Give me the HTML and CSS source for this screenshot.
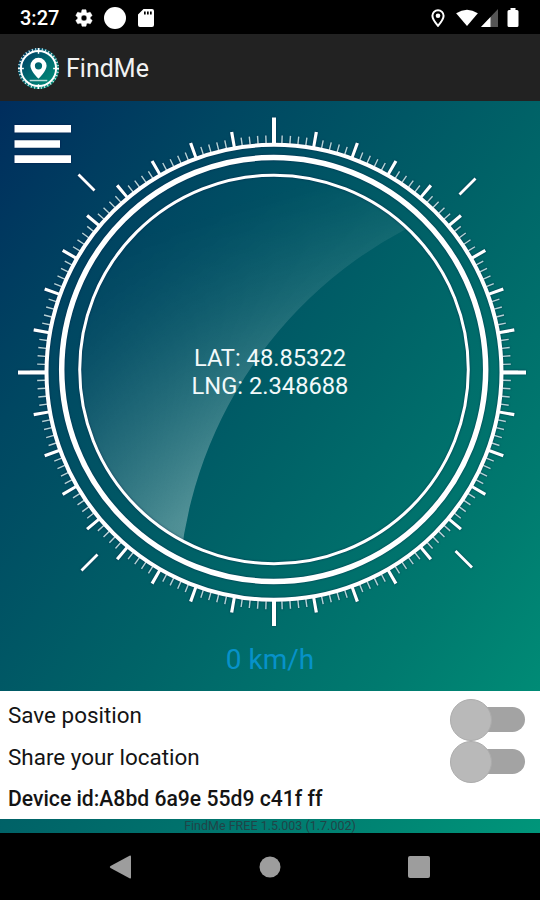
FILE: index.html
```html
<!DOCTYPE html>
<html lang="en">
<head>
<meta charset="utf-8">
<title>FindMe</title>
<link rel="stylesheet" href="styles.css">
</head>
<body>
<div class="phone">
  <div class="status">
    <span class="time">3:27</span>
    <svg class="gear" viewBox="0 0 24 24"><path fill-rule="evenodd" d="M19.4 13c.1-.7.1-1.300 0-2l2.100-1.600c.2-.2.300-.4.1-.7l-2-3.400c-.1-.3-.4-.3-.6-.3l-2.500 1c-.5-.4-1.100-.7-1.700-1L14.500 2.400c0-.3-.2-.4-.5-.4h-4c-.3 0-.5.2-.5.4L9.100 5c-.6.3-1.200.6-1.700 1L4.900 5c-.2-.1-.5 0-.6.2l-2 3.500c-.1.2-.1.500.1.700L4.500 11c-.1.700-.1 1.300 0 2l-2.100 1.600c-.2.2-.3.4-.1.700l2 3.400c.1.3.4.300.6.300l2.500-1c.5.4 1.100.7 1.700 1l.4 2.600c0 .3.200.4.500.4h4c.3 0 .5-.2.500-.4l.4-2.600c.6-.3 1.200-.6 1.700-1l2.500 1c.2.1.5 0 .6-.300l2-3.400c.1-.2.1-.5-.1-.7zM12 15.500a3.500 3.500 0 1 1 0-7 3.500 3.500 0 0 1 0 7z"/></svg>
    <span class="dot"></span>
    <svg class="sd" viewBox="0 0 16 18"><path fill-rule="evenodd" d="M5.500 0H14q2 0 2 2v14q0 2-2 2H2q-2 0-2-2V5.500zM6 2.500v3h1.700v-3zm3 0v3h1.700v-3zm3 0v3h1.700v-3z"/></svg>
    <span class="spacer"></span>
    <svg class="loc" viewBox="0 0 14 18"><path d="M7 1.200a5.600 5.600 0 0 0-5.600 5.600C1.400 10.500 7 16.800 7 16.800s5.600-6.300 5.600-10A5.600 5.600 0 0 0 7 1.200z"/><circle cx="7" cy="6.800" r="2.300"/></svg>
    <svg class="wifi" viewBox="0 0 24 18"><path d="M.5 4.500Q12-3 23.500 4.500L12 18z"/></svg>
    <svg class="signal" viewBox="0 0 17 18"><path class="dim" d="M17 0v18H0z"/><path d="M9.500 8v10H0z"/></svg>
    <svg class="battery" viewBox="0 0 12 19"><path d="M3.500 0h5v2H10q1.500 0 1.500 1.500v14q0 1.500-1.500 1.500H2Q.5 19 .5 17.500v-14Q.5 2 2 2h1.500z"/></svg>
  </div>

  <header class="appbar">
    <svg class="logo" viewBox="0 0 44 44">
      <defs><linearGradient id="lg" x1="0" y1="0" x2="1" y2="1"><stop offset="0" stop-color="#003264"/><stop offset=".5" stop-color="#006a70"/><stop offset="1" stop-color="#009878"/></linearGradient></defs>
      <circle cx="22" cy="22" r="21" fill="url(#lg)"/>
      <circle class="logo-ticks" cx="22" cy="22" r="20" pathLength="360"/>
      <circle class="logo-ring" cx="22" cy="22" r="18"/>
      <path class="logo-marks" d="M22 1v6M1 22h6M37 22h6M22 38v5"/>
      <path fill="#fff" fill-rule="evenodd" d="M22 11a8.300 8.300 0 0 0-8.300 8.300C13.700 24.800 22 32.500 22 32.500s8.300-7.700 8.300-13.200A8.300 8.300 0 0 0 22 11zm0 4.600a3.700 3.700 0 1 1 0 7.400 3.700 3.700 0 0 1 0-7.400z"/>
      <path stroke="#b8dcd8" stroke-width="1.500" d="M13 34.300h18"/>
    </svg>
    <h1>FindMe</h1>
  </header>

  <main class="content">
    <section class="compass">
      <svg class="dial" viewBox="0 101 540 590">
        <defs>
          <linearGradient id="gloss" gradientUnits="userSpaceOnUse" x1="160" y1="225" x2="240" y2="505"><stop offset="0" stop-color="#fff" stop-opacity="0"/><stop offset=".35" stop-color="#fff" stop-opacity=".1"/><stop offset="1" stop-color="#fff" stop-opacity=".32"/></linearGradient>
          <radialGradient id="sweep" gradientUnits="userSpaceOnUse" cx="604" cy="606" r="640"><stop offset=".666" stop-color="#fff"/><stop offset=".82" stop-color="#999"/><stop offset="1" stop-color="#000"/></radialGradient>
          <mask id="fade"><rect x="60" y="150" width="430" height="430" fill="url(#sweep)"/></mask>
          <clipPath id="face"><circle cx="274" cy="369.500" r="193"/></clipPath>
        </defs>
        <g mask="url(#fade)"><path clip-path="url(#face)" fill="url(#gloss)" d="M60 150H460V205.300A426 426 0 0 0 180.500 560H60z"/></g>
        <g class="lines">
          <circle class="minor" cx="274" cy="372.300" r="233" pathLength="360"/>
          <circle class="major" cx="274" cy="372.300" r="236" pathLength="360"/>
          <circle class="outer" cx="274" cy="372.300" r="227.500"/>
          <circle class="middle" cx="273.700" cy="369.500" r="212"/>
          <circle class="inner" cx="274" cy="369.500" r="194.300"/>
          <path class="cardinal" d="M274 117.500v27M274 600v26M18 372.500h27M503 372.500h23"/>
          <path class="diagonal" d="M459.500 194.500 475.500 178.500M78.500 174.500 94.500 190.500M455.500 551 472 567.500M81.500 570.500 97.500 554.500"/>
        </g>
        <g class="menu"><path d="M14.500 125h56.500v7.500H14.500zM14.500 140.200h45.500v7.600H14.500zM14.500 155.300h56.500v7.600H14.500z"/></g>
      </svg>
      <div class="coords"><div class="lat">LAT: 48.85322</div><div class="lng">LNG: 2.348688</div></div>
      <div class="speed">0 km/h</div>
    </section>

    <section class="panel">
      <div class="row"><span>Save position</span><span class="toggle"></span></div>
      <div class="row"><span>Share your location</span><span class="toggle"></span></div>
      <div class="row device">Device id:A8bd 6a9e 55d9 c41f ff</div>
    </section>
    <div class="version">FindMe FREE 1.5.003 (1.7.002)</div>
  </main>

  <nav class="navbar">
    <svg viewBox="0 0 24 24"><path d="M22 1.500v21q0 1.500-1.500.7L1.500 13q-1.500-1 0-2L20.500.8Q22 0 22 1.500z"/></svg>
    <svg viewBox="0 0 24 24"><circle cx="12" cy="12" r="10.500"/></svg>
    <svg viewBox="0 0 24 24"><rect x="1" y="1" width="22" height="22" rx="2"/></svg>
  </nav>
</div>
</body>
</html>
```
FILE: styles.css
```css
* { box-sizing: border-box; }
body { margin: 0; background: #000; font-family: Roboto, "Liberation Sans", sans-serif; }
svg { display: block; flex: none; }
.phone { width: 540px; height: 900px; display: flex; flex-direction: column; overflow: hidden; }

.status { height: 34px; background: #000; display: flex; align-items: center; padding: 1px 21px 0 20px; color: #fff; fill: #fff; }
.time { width: 54px; padding-top: 1px; font-size: 20px; font-weight: 500; line-height: 32px; }
.gear { width: 20px; height: 20px; stroke: #fff; stroke-width: .6; }
.dot { width: 22px; height: 22px; border-radius: 50%; background: #fff; margin: 0 12px 0 10px; }
.sd { width: 16px; height: 18px; }
.spacer { flex: 1; }
.loc { width: 14px; height: 18px; margin-right: 10px; }
.loc path { fill: none; stroke: #fff; stroke-width: 2; }
.wifi { width: 24px; height: 17px; margin-right: 2px; }
.signal { width: 17px; height: 18px; margin-right: 9px; }
.dim { fill: #555; }
.battery { width: 12px; height: 19px; }

.appbar { height: 67px; background: #222; display: flex; align-items: center; padding: 2px 0 0 17px; }
.logo { width: 43px; height: 43px; }
.logo-ring { fill: none; stroke: #fff; stroke-width: 2; }
.logo-ticks { fill: none; stroke: #d9ecec; stroke-width: 2; stroke-dasharray: 3 7; }
.logo-marks { stroke: #fff; stroke-width: 1.5; }
h1 { margin: 0 0 0 6px; font-size: 25px; font-weight: 400; line-height: 32px; color: #f2f2f2; }

.content { height: 732px; background: linear-gradient(to bottom right, #002d5d 0%, #004762 22%, #006267 50%, #007a6f 75%, #00967a 100%); }
.compass { height: 590px; display: grid; grid-template-rows: 243px 56px 242px 49px; position: relative; }
.dial { position: absolute; inset: 0; width: 540px; height: 590px; }
.lines { fill: none; stroke: #fff; filter: drop-shadow(0 0 1px rgba(0, 20, 60, .6)); }
.minor { stroke-width: 8; stroke: #b5d2d5; stroke-dasharray: .35 1.65; stroke-dashoffset: .175; }
.major { stroke-width: 16; stroke-dasharray: .75 9.25; stroke-dashoffset: .375; }
.outer { stroke-width: 4; }
.middle { stroke-width: 5.5; }
.inner { stroke-width: 3; }
.cardinal { stroke-width: 4; }
.diagonal { stroke-width: 2.8; }
.menu { fill: #fff; filter: drop-shadow(0 0 1px rgba(0, 20, 70, .8)); }
.coords { grid-row: 2; position: relative; text-align: center; color: #f2f9fa; font-size: 23.700px; line-height: 28px; }
.speed { grid-row: 4; position: relative; text-align: center; color: #0792c9; font-size: 28px; line-height: 36px; }

.panel { height: 128px; padding: 7px 15px 0 8px; background: #fff; color: #141414; font-size: 22.450px; }
.row { height: 42px; display: flex; justify-content: space-between; line-height: 35px; }
.device { font-weight: 500; font-size: 21.150px; line-height: 33px; }
.toggle { width: 75px; height: 40px; margin-top: 1px; display: flex; align-items: center; position: relative; }
.toggle::before { content: ""; width: 63px; height: 25px; margin-left: 12px; border-radius: 13px; background: #a3a3a3; }
.toggle::after { content: ""; position: absolute; left: 0; top: 0; width: 40px; height: 40px; border-radius: 50%; background: #b9b9b9; border: 1px solid #acacac; }
.version { height: 14px; text-align: center; color: #204448; font-size: 12.500px; line-height: 13px; }

.navbar { height: 67px; background: #000; display: flex; align-items: center; justify-content: center; gap: 125px; fill: #9d9d9d; }
.navbar svg { width: 24px; height: 24px; }
```
